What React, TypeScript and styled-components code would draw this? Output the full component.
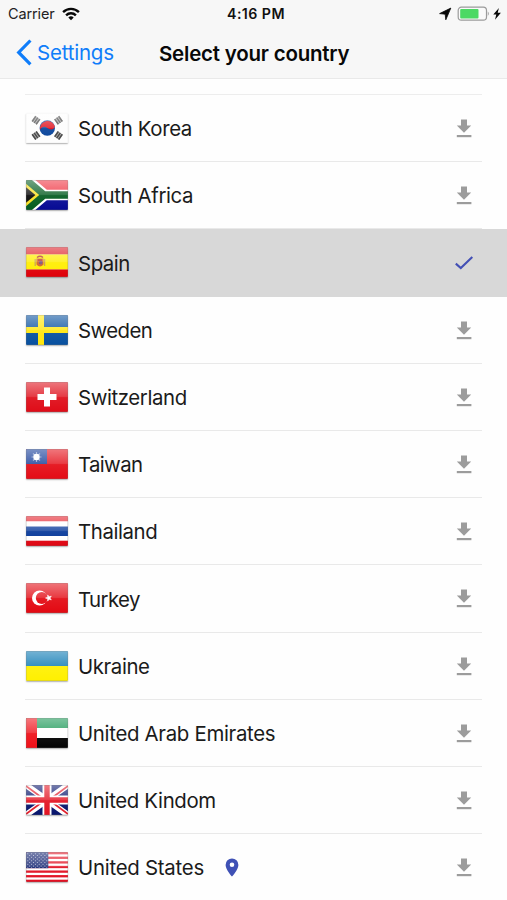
import React from "react";
import styled, { createGlobalStyle } from "styled-components";

const GlobalStyle = createGlobalStyle`
  * { box-sizing: border-box; }
  html, body { margin: 0; padding: 0; background: #fff; }
  body { font-family: Inter, "Liberation Sans", sans-serif; color: #1b1b1b; overflow: hidden; }
`;

const Screen = styled.main`
  width: 507px;
  height: 900px;
  overflow: hidden;
  background: #fefefe;
`;

const Header = styled.header`
  height: 79px;
  background: #f7f7f7;
  border-bottom: 1px solid #e9e9e9;
`;

const StatusBar = styled.div`
  display: grid;
  grid-template-columns: 1fr auto 1fr;
  align-items: center;
  height: 27px;
  padding: 0 5px 0 8px;
`;

const Carrier = styled.div`
  display: flex;
  align-items: center;
  gap: 7px;
  font-size: 14.5px;
  letter-spacing: -0.12px;
  color: #222;
`;

const Clock = styled.div`
  font-size: 14.2px;
  font-weight: 600;
  letter-spacing: 0.45px;
  color: #111;
  margin-left: 2px;
`;

const StatusIcons = styled.div`
  display: flex;
  align-items: center;
  justify-content: flex-end;
`;

const NavBar = styled.nav`
  display: flex;
  align-items: center;
  height: 51px;
  padding-left: 16px;
`;

const Back = styled.a`
  display: flex;
  align-items: center;
  gap: 5px;
  width: 143px;
  color: #0f7dfa;
  font-size: 20.5px;
  letter-spacing: -0.22px;
  white-space: nowrap;
`;

const Title = styled.h1`
  margin: 2px 0 0;
  font-size: 20.5px;
  font-weight: 600;
  letter-spacing: -0.22px;
  color: #080808;
  white-space: nowrap;
`;

const List = styled.ul`
  list-style: none;
  margin: 0;
  padding: 0;
`;

const Stub = styled.li`
  height: 16px;
  margin: 0 25px;
  border-bottom: 1px solid #ededed;
`;

const Row = styled.li<{ $selected?: boolean }>`
  height: 67.2px;
  padding: 0 25px;
  background: ${(p) => (p.$selected ? "#d8d8d8" : "transparent")};
`;

const RowBody = styled.div<{ $line: boolean }>`
  display: flex;
  align-items: center;
  height: 100%;
  border-bottom: 1px solid ${(p) => (p.$line ? "#e9e9e9" : "transparent")};
`;

const FlagFrame = styled.svg`
  flex: none;
  width: 42px;
  height: 30px;
  margin: 0 10px 0 1px;
  border-radius: 1px;
  box-shadow: 0 1px 1.5px rgba(0, 0, 0, 0.3);
`;

const Name = styled.span<{ $tracking: number }>`
  padding-top: 1.4px;
  font-size: 20.4px;
  letter-spacing: ${(p) => p.$tracking}px;
  white-space: nowrap;
`;

const Pin = styled.svg`
  width: 14px;
  height: 19px;
  margin: 1px 0 0 21px;
`;

const Action = styled.span`
  display: flex;
  justify-content: center;
  width: 20px;
  margin-top: 2px;
  margin-left: auto;
  margin-right: 8px;
`;

const DownloadIcon = () => (
  <svg width="16" height="20" viewBox="0 0 16 20" fill="#9c9c9c">
    <path d="M5 0.6h6v6h4.2L8 13.8 0.8 6.6H5z" />
    <path d="M.8 16h14.6v2.2H.8z" />
  </svg>
);

const CheckIcon = () => (
  <svg width="20" height="16" viewBox="0 0 20 16" fill="none" stroke="#4350b5" strokeWidth="2.1">
    <path d="M1.8 8.6 6.8 13 18.3 2" />
  </svg>
);

const StripeSet = ({ colors, stops }: { colors: string[]; stops: number[] }) => (
  <>
    {colors.map((c, i) => (
      <rect key={i} x="0" y={stops[i]} width="42" height={stops[i + 1] - stops[i]} fill={c} />
    ))}
  </>
);

const Trigram = ({ x, y, turn }: { x: number; y: number; turn: number }) => (
  <g transform={`translate(${x} ${y}) rotate(${turn})`}>
    <rect x="-3.2" y="-3.2" width="6.4" height="6.4" fill="#aaa" />
    <path d="M-3.2-2.4h6.4M-3.2 0h6.4M-3.2 2.4h6.4" stroke="#444" strokeWidth="1.5" />
  </g>
);

const starPositions = Array.from({ length: 9 }, (_, r) =>
  Array.from({ length: r % 2 ? 5 : 6 }, (_, c) => ({ x: 1.8 + c * 3.8 + (r % 2 ? 1.9 : 0), y: 1.7 + r * 1.75 }))
).flat();

const flags: Record<string, React.ReactNode> = {
  kr: (
    <>
      <rect width="42" height="30" fill="#fdfdfd" />
      <circle cx="21.3" cy="15" r="7.7" fill="#07439a" />
      <path d="M13.9 17A7.7 7.7 0 0 1 28.9 13.6C27.8 17 24 17.2 21.3 15c-2.6-2-5.5-1.6-7.4 2z" fill="#df0815" />
      <Trigram x={10} y={7.3} turn={-55} />
      <Trigram x={32.5} y={7.3} turn={55} />
      <Trigram x={10} y={22.5} turn={55} />
      <Trigram x={32.5} y={22.5} turn={-55} />
    </>
  ),
  za: (
    <>
      <rect width="42" height="15" fill="#ef3340" />
      <rect y="15" width="42" height="15" fill="#060a94" />
      <path d="M0-1 19 15H42M0 31 19 15" fill="none" stroke="#fff" strokeWidth="10.4" />
      <path d="M-1-1 18 15H42M-1 31 18 15" fill="none" stroke="#045c20" strokeWidth="7.4" />
      <path d="M0 3.8 13.2 15 0 26.2z" fill="#f8df22" />
      <path d="M0 7.2 9.4 15 0 22.8z" fill="#080808" />
    </>
  ),
  es: (
    <>
      <StripeSet colors={["#dd1c26", "#ffee00", "#df0009"]} stops={[0, 7.5, 22.5, 30]} />
      <path d="M10.5 11.5h7v6q-3.5 4-7 0z" fill="#cf632b" />
      <path d="M9.2 12v7M18.6 12v7" stroke="#c9a04c" strokeWidth="1.3" />
      <path d="M11 10.5q3-2.4 6 0M12 13h4M13 16h3" stroke="#b12626" strokeWidth="1.5" fill="none" />
      <circle cx="14.8" cy="15.6" r="1.8" fill="#7b5580" />
    </>
  ),
  se: (
    <>
      <rect width="42" height="30" fill="#07509f" />
      <path d="M15 0v30M0 15h42" stroke="#ffe70c" strokeWidth="6" />
    </>
  ),
  ch: (
    <>
      <rect width="42" height="30" fill="#df0c18" />
      <path d="M21 5.5v19M11.5 15h19" stroke="#fff" strokeWidth="6" />
    </>
  ),
  tw: (
    <>
      <rect width="42" height="30" fill="#e40c16" />
      <rect width="21" height="15" fill="#153c98" />
      <path d="M10.5 3v10M5.5 8h10M7 4.5l7 7M7 11.5l7-7" stroke="#fff" strokeWidth="1.2" opacity=".5" />
      <circle cx="10.5" cy="8" r="3.2" fill="#fff" />
    </>
  ),
  th: <StripeSet colors={["#e51c27", "#fff", "#06389a", "#fff", "#df0713"]} stops={[0, 5.5, 10.5, 20, 24.7, 30]} />,
  tr: (
    <>
      <rect width="42" height="30" fill="#e30912" />
      <circle cx="13.6" cy="15" r="7.6" fill="#fff" />
      <circle cx="15.8" cy="15" r="6" fill="#e30912" />
      <path d="m19.5 15 2.2-.7v-2.4l1.4 1.9 2.2-.7-1.3 1.9 1.3 1.9-2.2-.7-1.4 1.9v-2.4z" fill="#fff" stroke="#fff" strokeWidth=".6" />
    </>
  ),
  ua: <StripeSet colors={["#0877b2", "#fff000"]} stops={[0, 15, 30]} />,
  ae: (
    <>
      <StripeSet colors={["#169653", "#fff", "#030303"]} stops={[0, 10, 20, 30]} />
      <rect width="11" height="30" fill="#ef1018" />
    </>
  ),
  gb: (
    <>
      <rect width="42" height="30" fill="#07156d" />
      <path d="m0 0 42 30M42 0 0 30" stroke="#fff" strokeWidth="6" />
      <path d="m0 1 19 14M42 29 23 15M42 1 23 15M0 29l19-14" stroke="#e01c29" strokeWidth="1.8" />
      <path d="M21 0v30M0 15h42" stroke="#fff" strokeWidth="9" />
      <path d="M21 0v30M0 15h42" stroke="#e31322" strokeWidth="5.4" />
    </>
  ),
  us: (
    <>
      <rect width="42" height="30" fill="#fff" />
      {Array.from({ length: 7 }, (_, i) => (
        <rect key={i} y={(i * 60) / 13} width="42" height={30 / 13} fill="#e20f21" />
      ))}
      <rect width="22.3" height="16.2" fill="#10206f" />
      {starPositions.map((s, i) => (
        <circle key={i} cx={s.x} cy={s.y} r=".5" fill="#c9cde2" />
      ))}
    </>
  ),
};

const Flag = ({ code }: { code: string }) => (
  <FlagFrame viewBox="0 0 42 30">
    <defs>
      <linearGradient id={`gloss-${code}`} x1="0" y1="0" x2="0" y2="1">
        <stop offset="0" stopColor="#fff" stopOpacity=".44" />
        <stop offset=".48" stopColor="#fff" stopOpacity=".2" />
        <stop offset=".52" stopColor="#fff" stopOpacity=".07" />
        <stop offset="1" stopColor="#fff" stopOpacity="0" />
      </linearGradient>
    </defs>
    {flags[code]}
    <rect width="42" height="30" fill={`url(#gloss-${code})`} />
    <rect x=".5" y=".5" width="41" height="29" fill="none" stroke="#777" strokeOpacity={code === "kr" ? 0.04 : 0.2} />
  </FlagFrame>
);

type Country = { code: string; name: string; tracking: number; selected?: boolean; located?: boolean };

const countries: Country[] = [
  { code: "kr", name: "South Korea", tracking: -0.35 },
  { code: "za", name: "South Africa", tracking: -0.38 },
  { code: "es", name: "Spain", tracking: -0.45, selected: true },
  { code: "se", name: "Sweden", tracking: -0.58 },
  { code: "ch", name: "Switzerland", tracking: -0.4 },
  { code: "tw", name: "Taiwan", tracking: -0.65 },
  { code: "th", name: "Thailand", tracking: -0.4 },
  { code: "tr", name: "Turkey", tracking: -0.6 },
  { code: "ua", name: "Ukraine", tracking: -0.4 },
  { code: "ae", name: "United Arab Emirates", tracking: -0.31 },
  { code: "gb", name: "United Kindom", tracking: -0.34 },
  { code: "us", name: "United States", tracking: -0.25, located: true },
];

export default function App() {
  return (
    <Screen>
      <GlobalStyle />
      <Header>
        <StatusBar>
          <Carrier>
            Carrier
            <svg width="18" height="14" viewBox="0 0 18 14" fill="none" stroke="#080808" strokeWidth="2.4">
              <path d="M1.1 5.1a11.3 11.3 0 0 1 15.8 0" />
              <path d="M4.1 8.3a7 7 0 0 1 9.8 0" />
              <path d="M6.3 10.6a3.8 3.8 0 0 1 5.4 0L9 13.3z" fill="#080808" stroke="none" />
            </svg>
          </Carrier>
          <Clock>4:16 PM</Clock>
          <StatusIcons>
            <svg width="63" height="18" viewBox="0 0 63 18">
              <path d="M11.8 3.1.6 8.6l5.6.6.6 5.6z" fill="#080808" stroke="#080808" strokeWidth=".8" strokeLinejoin="round" />
              <rect x="19.2" y="2.2" width="28.3" height="13" rx="3.2" fill="#fafafa" stroke="#9b9b9b" strokeWidth="1.2" />
              <rect x="21.2" y="4" width="18.3" height="9.4" rx="1" fill="#4cd964" />
              <path d="M48.8 6.5q2 2.2 0 4.4z" fill="#9b9b9b" />
              <path d="m59.9 3-5.6 6.4h3L56 14.8l5.9-7h-3.2z" fill="#080808" />
            </svg>
          </StatusIcons>
        </StatusBar>
        <NavBar>
          <Back>
            <svg width="16" height="27" viewBox="0 0 16 27" fill="none" stroke="#0f7dfa" strokeWidth="3.2">
              <path d="M14.4 1.5 2.7 13.4l11.7 12" />
            </svg>
            Settings
          </Back>
          <Title>Select your country</Title>
        </NavBar>
      </Header>
      <List>
        <Stub />
        {countries.map((c, i) => (
          <Row key={c.code} $selected={c.selected}>
            <RowBody $line={!c.selected && i < countries.length - 1}>
              <Flag code={c.code} />
              <Name $tracking={c.tracking}>{c.name}</Name>
              {c.located && (
                <Pin viewBox="0 0 14 19">
                  <path d="M7 .5A6.4 6.4 0 0 0 .6 6.9C.6 11.6 7 18.5 7 18.5s6.4-6.9 6.4-11.6A6.4 6.4 0 0 0 7 .5zm0 4a2.3 2.3 0 1 1 0 4.6 2.3 2.3 0 0 1 0-4.6z" fill="#3f51b5" fillRule="evenodd" />
                </Pin>
              )}
              <Action>{c.selected ? <CheckIcon /> : <DownloadIcon />}</Action>
            </RowBody>
          </Row>
        ))}
      </List>
    </Screen>
  );
}
